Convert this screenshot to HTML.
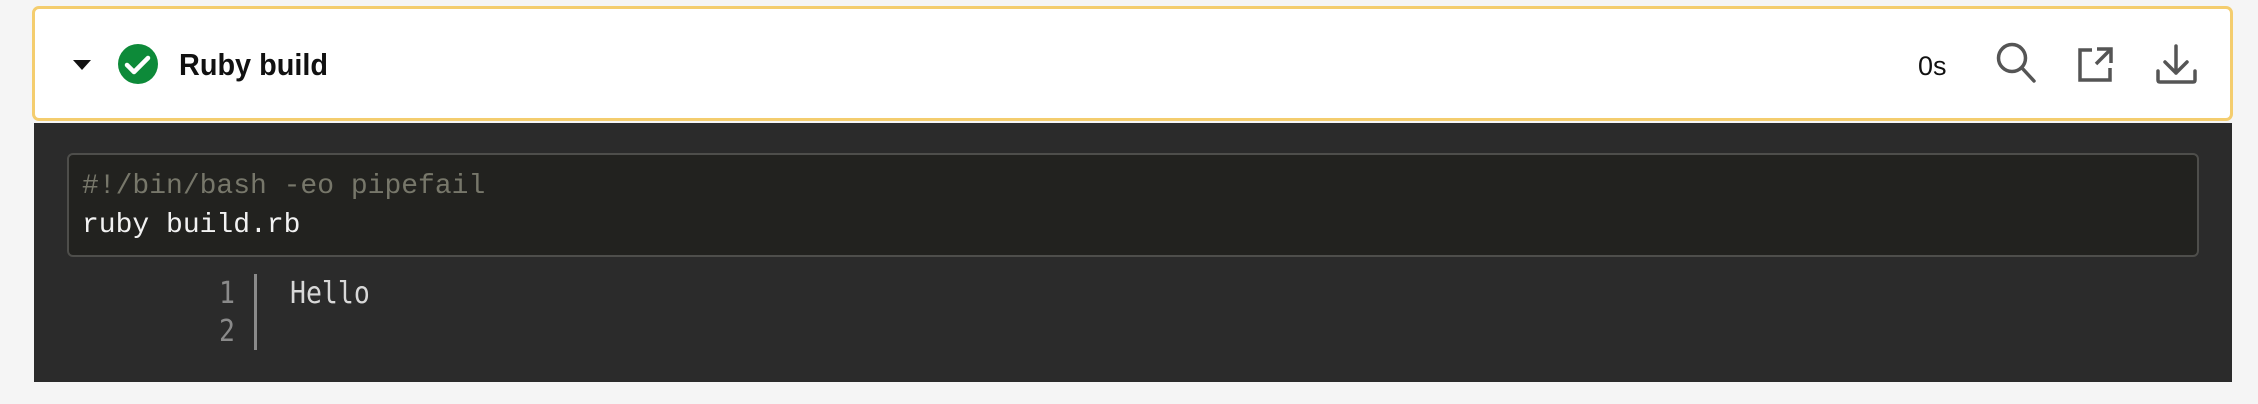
<!DOCTYPE html>
<html><head><meta charset="utf-8"><style>
html,body{margin:0;padding:0;width:2258px;height:404px;background:#f5f5f5;overflow:hidden;font-family:"Liberation Sans",sans-serif}
.hdr{position:absolute;left:32px;top:6px;width:2195px;height:109px;background:#fff;border:3px solid #f4cd6e;border-radius:7px}
.dark{position:absolute;left:34px;top:123px;width:2198px;height:259px;background:#2b2b2b}
.code{position:absolute;left:67px;top:153px;width:2132px;height:104px;background:#22221f;border:2px solid #4e4e4b;border-radius:6px;box-sizing:border-box}
.mono{font-family:"Liberation Mono",monospace;font-size:28px;position:absolute;white-space:pre;line-height:38px}
.log{font-family:"DejaVu Sans Mono",monospace;font-size:26.5px;position:absolute;white-space:pre;line-height:38px;transform:scaleY(1.15);transform-origin:0 50%}
</style></head><body>
<div class="hdr"></div>
<svg style="position:absolute;left:0;top:0" width="2258" height="130">
<polygon points="73,60 91,60 82,70" fill="#111"/>
<circle cx="138" cy="64" r="20" fill="#0d8a39"/>
<polyline points="127,65 134,72 148,58" fill="none" stroke="#fff" stroke-width="4.5" stroke-linecap="round" stroke-linejoin="round"/>
<text x="179" y="75" font-family="Liberation Sans" font-weight="bold" font-size="31" fill="#111" textLength="149" lengthAdjust="spacingAndGlyphs">Ruby build</text>
<text x="1918" y="75" font-family="Liberation Sans" font-size="27" fill="#111">0s</text>
<g fill="none" stroke="#555" stroke-width="3.5">
<circle cx="2012" cy="58" r="13.5"/>
<line x1="2022" y1="68" x2="2034" y2="81" stroke-linecap="round"/>
<path d="M2092 50 H2080 V80 H2110 V68"/>
<path d="M2097 49 H2111 V63 M2111 49 L2096 64"/>
<path d="M2176 46 V73 M2165 62 L2176 73 L2187 62" stroke-linecap="round" stroke-linejoin="round"/>
<path d="M2158 71 V80 Q2158 82 2160 82 H2193 Q2195 82 2195 80 V71" stroke-linecap="round"/>
</g>
</svg>
<div class="dark"></div>
<div class="code"></div>
<div class="mono" style="left:82px;top:168px;color:#77776a;font-family:'Liberation Mono',monospace">#!/bin/bash -eo pipefail</div>
<div class="mono" style="left:82px;top:207px;color:#f2f2f2">ruby build.rb</div>
<div class="log" style="left:219px;top:275px;color:#8a8a8a">1</div>
<div class="log" style="left:219px;top:313px;color:#8a8a8a">2</div>
<div style="position:absolute;left:254px;top:274px;width:3px;height:76px;background:#8a8a8a"></div>
<div class="log" style="left:290px;top:275px;color:#d8d8d8">Hello</div>
</body></html>
